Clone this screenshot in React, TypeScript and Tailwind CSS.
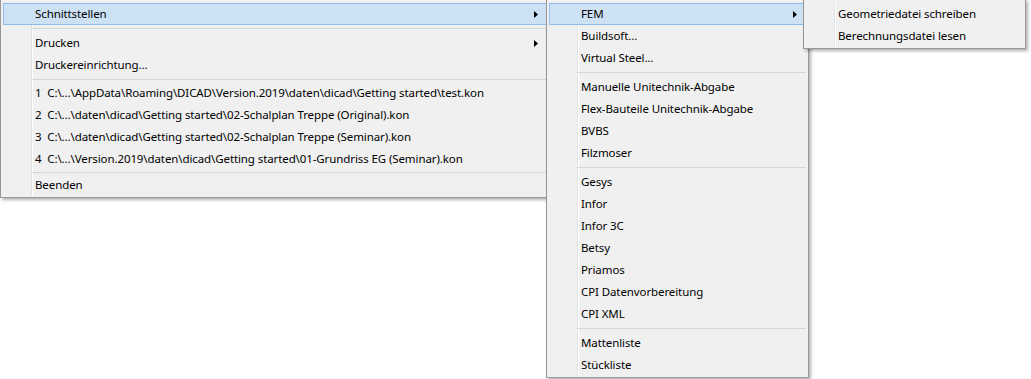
type Item =
  | { kind: "item"; label: string; arrow?: boolean; active?: boolean }
  | { kind: "sep"; h: string };

const item = (label: string, arrow = false, active = false): Item => ({
  kind: "item",
  label,
  arrow,
  active,
});

// separator heights are not all equal in the original
const sep7: Item = { kind: "sep", h: "h-[7px]" };
const sep6: Item = { kind: "sep", h: "h-[6px]" };
const sep4: Item = { kind: "sep", h: "h-[4px]" };

const MAIN: Item[] = [
  item("Schnittstellen", true, true),
  sep7,
  item("Drucken", true),
  item("Druckereinrichtung..."),
  sep6,
  item("1  C:\\...\\AppData\\Roaming\\DICAD\\Version.2019\\daten\\dicad\\Getting started\\test.kon"),
  item("2  C:\\...\\daten\\dicad\\Getting started\\02-Schalplan Treppe (Original).kon"),
  item("3  C:\\...\\daten\\dicad\\Getting started\\02-Schalplan Treppe (Seminar).kon"),
  item("4  C:\\...\\Version.2019\\daten\\dicad\\Getting started\\01-Grundriss EG (Seminar).kon"),
  sep4,
  item("Beenden"),
];

const SCHNITTSTELLEN: Item[] = [
  item("FEM", true, true),
  item("Buildsoft..."),
  item("Virtual Steel..."),
  sep7,
  item("Manuelle Unitechnik-Abgabe"),
  item("Flex-Bauteile Unitechnik-Abgabe"),
  item("BVBS"),
  item("Filzmoser"),
  sep7,
  item("Gesys"),
  item("Infor"),
  item("Infor 3C"),
  item("Betsy"),
  item("Priamos"),
  item("CPI Datenvorbereitung"),
  item("CPI XML"),
  sep7,
  item("Mattenliste"),
  item("Stückliste"),
];

const FEM: Item[] = [item("Geometriedatei schreiben"), item("Berechnungsdatei lesen")];

function Arrow() {
  return (
    <svg width="4" height="7" viewBox="0 0 4 7" className="shrink-0">
      <polygon points="0,0 4,3.5 0,7" fill="#000" />
    </svg>
  );
}

function Menu({ items, className }: { items: Item[]; className: string }) {
  return (
    <div
      className={`absolute top-[-1px] border border-[#979797] bg-[#f0f0f0] px-[2px] pt-[3px] pb-[1px] shadow-[2px_2px_3px_rgba(0,0,0,0.3)] ${className}`}
    >
      <div className="flex flex-col bg-[linear-gradient(to_right,transparent_28px,#e2e3e3_28px,#e2e3e3_29px,#ffffff_29px,#ffffff_30px,transparent_30px)]">
        {items.map((it, i) =>
          it.kind === "sep" ? (
            <div key={i} className={`flex items-center pl-[28px] ${it.h}`}>
              <div className="h-px flex-1 bg-[#d7d7d7]" />
            </div>
          ) : (
            <div
              key={i}
              className={`flex h-[22px] items-center border pl-[31px] pr-[8px] ${
                it.active ? "border-[#90bce9] bg-[#cde1f5]" : "border-transparent"
              }`}
            >
              <span className="flex-1 whitespace-pre text-[11.5px] leading-[20px] tracking-[-0.1px] text-black">
                {it.label}
              </span>
              {it.arrow && <Arrow />}
            </div>
          )
        )}
      </div>
    </div>
  );
}

export default function App() {
  return (
    <div className="relative h-[379px] w-[1031px] overflow-hidden bg-white font-['Noto_Sans',sans-serif]">
      <Menu items={MAIN} className="left-0 z-10 w-[550px]" />
      <Menu items={SCHNITTSTELLEN} className="left-[546px] z-20 w-[263px]" />
      <Menu items={FEM} className="left-[803px] z-30 w-[223px]" />
    </div>
  );
}
